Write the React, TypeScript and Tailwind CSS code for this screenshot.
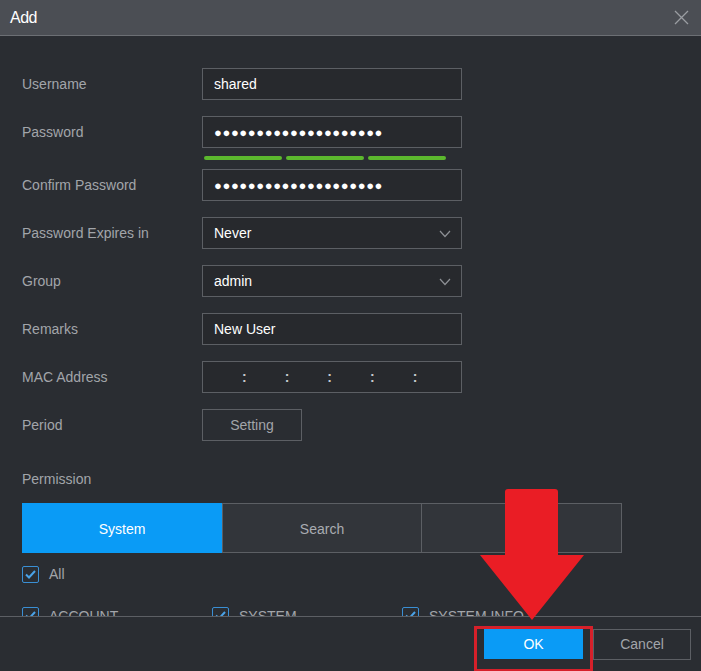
import React from 'react';

const font = { fontFamily: '"Liberation Sans", Arial, sans-serif' };

const Chevron = () => (
    <svg width="12" height="8" viewBox="0 0 12 8" className="absolute right-[10px] top-[12px]">
        <path d="M1 1 L6 6.5 L11 1" fill="none" stroke="#8d9095" strokeWidth="1.2" />
    </svg>
);

const Check = ({ label, className = '', low }: { label?: string; className?: string; low?: boolean }) => (
    <div className={`flex items-center ${className}`}>
        <span className="w-[17px] h-[17px] border-[1.5px] border-[#3a8fd4] rounded-[2px] flex items-center justify-center shrink-0">
            <svg width="11" height="9" viewBox="0 0 11 9">
                <path d="M1 4.5 L4 7.5 L10 1" fill="none" stroke="#4aa3e8" strokeWidth="2" />
            </svg>
        </span>
        {label && <span className={`ml-[10px] text-[14px] text-[#a2a5aa] ${low ? 'mt-[3px]' : ''}`}>{label}</span>}
    </div>
);

const Row: React.FC<{ label: string; children: React.ReactNode }> = ({ label, children }) => (
    <div className="flex items-center h-[32px]">
        <div className="w-[180px] text-[14px] text-[#a2a5aa]">{label}</div>
        {children}
    </div>
);

const Field: React.FC<{ value?: string; select?: boolean; children?: React.ReactNode }> = ({ value, select, children }) => (
    <div className="relative w-[260px] h-[32px] border border-[#5c5f64] bg-[#27292d] flex items-center pl-[11px] text-[14px] text-white">
        {value}
        {children}
        {select && <Chevron />}
    </div>
);

const dots = '●●●●●●●●●●●●●●●●●●●●';

export default function App() {
    return (
        <div className="w-[701px] h-[671px] bg-[#2a2d32] flex flex-col relative overflow-hidden" style={font}>
            {/* Header */}
            <div className="h-[36px] shrink-0 bg-[#4b4e54] border-b border-[#6c6f74] flex items-center justify-between pl-[10px] pr-[12px]">
                <span className="text-white text-[16px] tracking-[-0.5px]">Add</span>
                <svg width="15" height="15" viewBox="0 0 15 15">
                    <path d="M1 1 L14 14 M14 1 L1 14" stroke="#9a9da2" strokeWidth="1.3" />
                </svg>
            </div>

            {/* Body */}
            <div className="flex-1 overflow-hidden pl-[22px] pt-[32px]">
                <div className="flex flex-col gap-[16px]">
                    <Row label="Username"><Field value="shared" /></Row>
                    <div className="flex flex-col">
                        <Row label="Password">
                            <Field><span className="text-[13px] tracking-[0.6px] leading-none">{dots}</span></Field>
                        </Row>
                        <div className="flex gap-[4px] ml-[182px] mt-[8px] mb-[9px]">
                            <span className="w-[78px] h-[4px] rounded-full bg-[#5cb82e]" />
                            <span className="w-[78px] h-[4px] rounded-full bg-[#5cb82e]" />
                            <span className="w-[78px] h-[4px] rounded-full bg-[#5cb82e]" />
                        </div>
                        <Row label="Confirm Password">
                            <Field><span className="text-[13px] tracking-[0.6px] leading-none">{dots}</span></Field>
                        </Row>
                    </div>
                    <Row label="Password Expires in"><Field value="Never" select /></Row>
                    <Row label="Group"><Field value="admin" select /></Row>
                    <Row label="Remarks"><Field value="New User" /></Row>
                    <Row label="MAC Address">
                        <Field>
                            <div className="flex text-[#c6c9ce] text-[14px] font-bold">
                                {[0, 1, 2, 3, 4].map((i) => (
                                    <span key={i} className={i === 0 ? 'ml-[28px]' : 'ml-[38px]'}>:</span>
                                ))}
                            </div>
                        </Field>
                    </Row>
                    <Row label="Period">
                        <div className="w-[100px] h-[32px] border border-[#5c5f64] flex items-center justify-center text-[14px] text-[#a2a5aa]">
                            Setting
                        </div>
                    </Row>
                </div>

                <div className="mt-[30px] text-[14px] text-[#a2a5aa] leading-[16px]">Permission</div>

                <div className="mt-[16px] grid grid-cols-3 w-[600px] h-[50px] text-[14px]">
                    <div className="bg-[#0a9bf6] text-white flex items-center justify-center pt-[2px]">System</div>
                    <div className="bg-[#32353a] border border-[#5c5f64] text-[#a9acb1] flex items-center justify-center pt-[2px]">Search</div>
                    <div className="bg-[#32353a] border border-l-0 border-[#5c5f64] text-[#a9acb1] flex items-center justify-center pt-[2px]">Live</div>
                </div>

                <Check label="All" className="mt-[11px]" />

                <div className="flex mt-[18px]">
                    <Check label="ACCOUNT" className="w-[190px]" low />
                    <Check label="SYSTEM" className="w-[190px]" low />
                    <Check label="SYSTEM INFO" low />
                </div>
            </div>

            {/* Footer */}
            <div className="h-[55px] shrink-0 border-t border-[#5c5f64] flex items-center justify-end pr-[10px] gap-[10px]">
                <div className="w-[99px] h-[30px] bg-[#0a9bf6] text-white text-[14px] flex items-center justify-center">OK</div>
                <div className="w-[98px] h-[31px] border border-[#5c5f64] text-[#a2a5aa] text-[14px] flex items-center justify-center">Cancel</div>
            </div>

            {/* Red highlight frame */}
            <div className="absolute left-[474px] top-[626px] w-[119px] h-[46px] border-[3px] border-[#d6202a]" />

            {/* Red arrow */}
            <svg className="absolute left-[480px] top-[489px]" width="105" height="132" viewBox="0 0 105 132">
                <path d="M25 3 Q25 0 28 0 L75 0 Q78 0 78 3 L78 66 L104 66 L52 131 L0 66 L25 66 Z" fill="#ea1d25" />
            </svg>
        </div>
    );
}
